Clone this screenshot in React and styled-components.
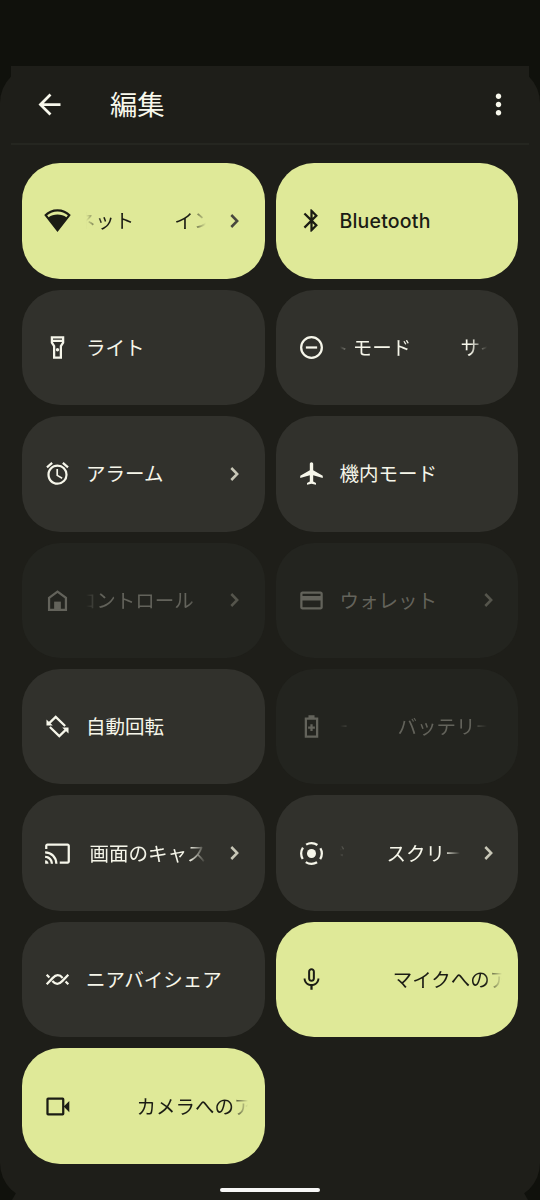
import React from "react";
import styled, { createGlobalStyle } from "styled-components";
import {
  MdAirplanemodeActive,
  MdAlarm,
  MdArrowBack,
  MdBluetooth,
  MdCast,
  MdCreditCard,
  MdMicNone,
  MdMoreVert,
} from "react-icons/md";

const GlobalStyle = createGlobalStyle`
  * {
    box-sizing: border-box;
  }
  body {
    margin: 0;
    background: #10110c;
    font-family: "Noto Sans CJK JP", sans-serif;
  }
`;

const Screen = styled.div`
  width: 540px;
  height: 1200px;
  padding-top: 66px;
  background: #10110c;
  overflow: hidden;
`;

const Sheet = styled.div`
  display: flex;
  flex-direction: column;
  height: 1134px;
  border-radius: 37px;
  background: #1e1e19;
`;

const Header = styled.header`
  display: flex;
  align-items: center;
  height: 79px;
  margin: 0 11px;
  padding: 0 14px 0 22px;
  background: #1e1e19;
  border-bottom: 2px solid #252620;
  color: #f8f8ec;
  svg {
    display: block;
    width: 33px;
    height: 33px;
  }
`;

const Title = styled.h1`
  flex: 1;
  margin: 0 0 0 44px;
  padding-bottom: 4px;
  font-size: 27.3px;
  font-weight: 400;
  line-height: 40px;
`;

const Grid = styled.main`
  display: grid;
  grid-template-columns: repeat(2, minmax(0, 1fr));
  grid-auto-rows: 115.5px;
  gap: 10.95px 11px;
  padding: 18.2px 22px 0;
`;

const tones = {
  on: { bg: "#dfe998", fg: "#1b1c14", arrow: "#48483e" },
  off: { bg: "#31312c", fg: "#f6f6ea", arrow: "#c8c7b7" },
  disabled: { bg: "#23241f", fg: "#63635b", arrow: "#55554c" },
};

const TileBox = styled.div`
  display: flex;
  align-items: center;
  padding: 0 25.5px 0 22px;
  border-radius: 38px;
  background: ${({ $tone }) => tones[$tone].bg};
  color: ${({ $tone }) => tones[$tone].fg};
`;

const IconBox = styled.div`
  flex: none;
  width: 27px;
  height: 27px;
  margin-right: 15px;
  svg {
    display: block;
    width: 27px;
    height: 27px;
    overflow: visible;
  }
`;

const Label = styled.div`
  font-family: ${({ $latin }) =>
    $latin ? `Inter, sans-serif` : `"Noto Sans CJK JP", sans-serif`};
  font-size: 19.5px;
  font-weight: ${({ $latin }) => ($latin ? 450 : 400)};
  letter-spacing: ${({ $latin }) => ($latin ? "0.2px" : "normal")};
  line-height: 28px;
  padding-bottom: ${({ $latin }) => ($latin ? 0 : 1)}px;
  white-space: nowrap;
`;

const Marquee = styled(Label)`
  flex: none;
  width: ${({ $width }) => $width}px;
  overflow: hidden;
  mask-image: linear-gradient(
    to right,
    ${({ $fadeLeft }) => ($fadeLeft ? "transparent" : "#000")},
    #000 16px,
    #000 calc(100% - 17px),
    transparent
  );
`;

/* the gap between two copies is a third of the visible width */
const Track = styled.div`
  display: flex;
  width: max-content;
  gap: ${({ $width }) => $width / 3}px;
  margin-left: ${({ $shift }) => $shift}px;
`;

const Chevron = styled.svg`
  width: 9px;
  height: 14px;
  margin-left: auto;
  fill: none;
  stroke: ${({ $tone }) => tones[$tone].arrow};
  stroke-width: 2.5;
`;

const Footer = styled.footer`
  display: flex;
  justify-content: center;
  height: 12px;
  margin-top: auto;
`;

const FooterBar = styled.div`
  width: 516px;
  height: 12px;
  background: #1e1e19;
  clip-path: polygon(0 100%, 4px 5px, 512px 5px, 100% 100%);
`;

const HomeHandle = styled.div`
  position: absolute;
  top: 1188px;
  width: 100px;
  height: 4px;
  border-radius: 2px;
  background: #f6f6f6;
`;

const Svg = ({ children, ...rest }) => (
  <svg viewBox="0 0 24 24" fill="none" stroke="currentColor" strokeWidth="2" {...rest}>
    {children}
  </svg>
);

const WifiIcon = () => (
  <Svg fill="currentColor" stroke="none">
    <path
      fillRule="evenodd"
      d="M12 22.3.2 7C3.4 3.7 7.4 2 12 2s8.6 1.7 11.8 5zM2.8 7.3l1.3 1.7C6.2 7.5 9 6.7 12 6.7s5.8.8 7.9 2.3l1.3-1.7C18.6 5 15.5 3.9 12 3.9S5.4 5 2.8 7.3z"
    />
  </Svg>
);

const FlashlightIcon = () => (
  <Svg fill="currentColor" stroke="none">
    <path d="M18 2H6v6l2 3v11h8V11l2-3V2zm-2 2v1H8V4h8zm-2 6.4V20h-4v-9.6l-2-3V7h8v.39l-2 3.01z" />
    <circle cx="12" cy="14" r="1.5" />
  </Svg>
);

const DndIcon = () => (
  <Svg>
    <circle cx="12" cy="12" r="9.2" />
    <path d="M7 12h10" />
  </Svg>
);

const HomeIcon = () => (
  <Svg>
    <path d="M4.5 9.6 12 4.1l7.5 5.5v10.7h-15z" />
    <path d="M9 13h6v7H9z" fill="currentColor" stroke="none" />
  </Svg>
);

const RotateIcon = () => (
  <Svg>
    <path d="M4.7 9l5.7-5.5 8.4 8.1M19.3 15l-5.7 5.5-8.4-8.1" />
    <path d="M2.2 5.8v5.4h5.6zM21.8 18.2v-5.4h-5.6z" fill="currentColor" stroke="none" />
  </Svg>
);

const BatteryIcon = () => (
  <Svg>
    <path d="M7 5h10v16H7zM9.3 3h5.4M12 10v6M9 13h6" />
  </Svg>
);

const RecordIcon = () => (
  <Svg>
    <circle cx="12" cy="12" r="4" fill="currentColor" stroke="none" />
    <circle cx="12" cy="12" r="9.2" strokeDasharray="10.6 3.851" strokeDashoffset="5.3" />
  </Svg>
);

const NearbyIcon = () => (
  <Svg>
    <path d="M2.4 16.2l5.2-5.4C9.4 8.9 10.6 8.2 12.2 8.2c1.8 0 3.2 1 4.4 2.4" />
    <path d="M21.6 7.8l-5.2 5.4c-1.8 1.9-3 2.6-4.6 2.6-1.8 0-3.2-1-4.4-2.4" />
    <path d="M2.4 7.8l2.4 2.4M19.2 13.8l2.4 2.4" />
  </Svg>
);

const CameraIcon = () => (
  <Svg>
    <rect x="3.1" y="5" width="14" height="14" rx="0.5" />
    <path d="M17.5 12l5-5v10z" fill="currentColor" stroke="none" />
  </Svg>
);

const tiles = [
  { label: "インターネット", icon: WifiIcon, tone: "on", arrow: true, width: 120, shift: -88.3 },
  { label: "Bluetooth", icon: MdBluetooth, tone: "on", latin: true },
  { label: "ライト", icon: FlashlightIcon, tone: "off" },
  { label: "サイレント モード", icon: DndIcon, tone: "off", width: 147, shift: -88.5 },
  { label: "アラーム", icon: MdAlarm, tone: "off", arrow: true },
  { label: "機内モード", icon: MdAirplanemodeActive, tone: "off" },
  { label: "デバイス コントロール", icon: HomeIcon, tone: "disabled", arrow: true, width: 120, shift: -91 },
  { label: "ウォレット", icon: MdCreditCard, tone: "disabled", arrow: true },
  { label: "自動回転", icon: RotateIcon, tone: "off" },
  { label: "バッテリー セーバー", icon: BatteryIcon, tone: "disabled", width: 147, shift: -170.8 },
  { label: "画面のキャスト", icon: MdCast, tone: "off", arrow: true, width: 120, shift: 3.5, start: true },
  { label: "スクリーン レコード", icon: RecordIcon, tone: "off", arrow: true, width: 120, shift: -172 },
  { label: "ニアバイシェア", icon: NearbyIcon, tone: "off" },
  { label: "マイクへのアクセス", icon: MdMicNone, tone: "on", width: 162, shift: -175 },
  { label: "カメラへのアクセス", icon: CameraIcon, tone: "on", width: 162, shift: -178 },
];

function Tile({ label, icon: Icon, tone, arrow, latin, width, shift, start }) {
  return (
    <TileBox $tone={tone}>
      <IconBox>
        <Icon />
      </IconBox>
      {width ? (
        <Marquee $width={width} $fadeLeft={!start}>
          <Track $width={width} $shift={shift}>
            <span>{label}</span>
            {!start && <span>{label}</span>}
          </Track>
        </Marquee>
      ) : (
        <Label $latin={latin}>{label}</Label>
      )}
      {arrow && (
        <Chevron $tone={tone} viewBox="0 0 9 14">
          <path d="M1.3 1l5.9 6-5.9 6" />
        </Chevron>
      )}
    </TileBox>
  );
}

export default function App() {
  return (
    <>
      <GlobalStyle />
      <Screen>
        <Sheet>
          <Header>
            <MdArrowBack />
            <Title>編集</Title>
            <MdMoreVert />
          </Header>
          <Grid>
            {tiles.map((tile) => (
              <Tile key={tile.label} {...tile} />
            ))}
          </Grid>
          <Footer>
            <FooterBar />
            <HomeHandle />
          </Footer>
        </Sheet>
      </Screen>
    </>
  );
}
